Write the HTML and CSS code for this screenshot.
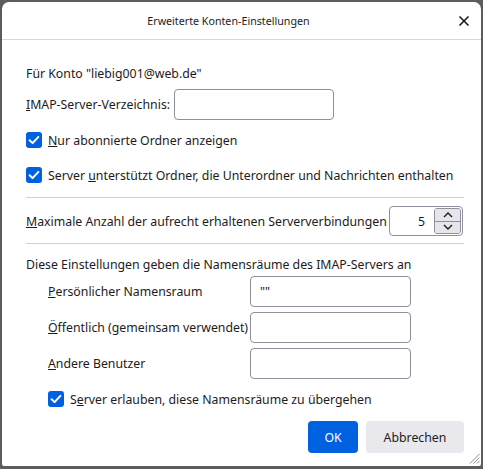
FILE: index.html
```html
<!DOCTYPE html>
<html lang="de">
<head>
<meta charset="utf-8">
<title>Erweiterte Konten-Einstellungen</title>
<link rel="stylesheet" href="styles.css">
</head>
<body>
<div class="window">
  <header class="titlebar">
    <span class="title">Erweiterte Konten-Einstellungen</span>
    <button class="close" aria-label="Schließen">
      <svg width="12" height="12" viewBox="0 0 12 12"><path d="M1.5 1.5 L10.5 10.5 M10.5 1.5 L1.5 10.5" stroke="#1b1b1b" stroke-width="1.6" fill="none"/></svg>
    </button>
  </header>

  <main class="content">
    <div class="row row-account">Für Konto "liebig001@web.de"</div>

    <div class="row row-dir">
      <label class="dir-label"><u>I</u>MAP-Server-Verzeichnis:</label>
      <span class="field field-dir"></span>
    </div>

    <div class="row row-check row-cb1">
      <span class="checkbox"><svg width="16" height="16" viewBox="0 0 16 16"><path d="M3.6 8.2 L6.6 11.1 L12.4 4.9" stroke="#fff" stroke-width="2" fill="none" stroke-linecap="round" stroke-linejoin="round"/></svg></span>
      <span><u>N</u>ur abonnierte Ordner anzeigen</span>
    </div>

    <div class="row row-check row-cb2">
      <span class="checkbox"><svg width="16" height="16" viewBox="0 0 16 16"><path d="M3.6 8.2 L6.6 11.1 L12.4 4.9" stroke="#fff" stroke-width="2" fill="none" stroke-linecap="round" stroke-linejoin="round"/></svg></span>
      <span>Server <u>u</u>nterstützt Ordner, die Unterordner und Nachrichten enthalten</span>
    </div>

    <hr class="sep sep-1">

    <div class="row row-max">
      <span><u>M</u>aximale Anzahl der aufrecht erhaltenen Serververbindungen</span>
      <span class="number">
        <span class="number-value">5</span>
        <span class="spin">
          <span class="spin-btn spin-up"><svg width="10" height="6" viewBox="0 0 10 6"><path d="M1 5 L5 1 L9 5" stroke="#1b1b1b" stroke-width="1.4" fill="none"/></svg></span>
          <span class="spin-btn spin-down"><svg width="10" height="6" viewBox="0 0 10 6"><path d="M1 1 L5 5 L9 1" stroke="#1b1b1b" stroke-width="1.4" fill="none"/></svg></span>
        </span>
      </span>
    </div>

    <hr class="sep sep-2">

    <div class="row row-ns-intro">Diese Einstellungen geben die Namensräume des IMAP-Servers an</div>

    <div class="ns-grid">
      <label><u>P</u>ersönlicher Namensraum</label>
      <span class="field field-ns">""</span>
      <label><u>Ö</u>ffentlich (gemeinsam verwendet)</label>
      <span class="field field-ns"></span>
      <label><u>A</u>ndere Benutzer</label>
      <span class="field field-ns"></span>
    </div>

    <div class="row row-check row-cb3">
      <span class="checkbox"><svg width="16" height="16" viewBox="0 0 16 16"><path d="M3.6 8.2 L6.6 11.1 L12.4 4.9" stroke="#fff" stroke-width="2" fill="none" stroke-linecap="round" stroke-linejoin="round"/></svg></span>
      <span>S<u>e</u>rver erlauben, diese Namensräume zu übergehen</span>
    </div>

    <div class="buttons">
      <button class="btn btn-primary">OK</button>
      <button class="btn btn-secondary">Abbrechen</button>
    </div>
  </main>

  <svg class="grip" width="11" height="11" viewBox="0 0 11 11">
    <path d="M10.5 1 L1 10.5 M10.5 4.5 L4.5 10.5 M10.5 8 L8 10.5" stroke="#8a8a8a" stroke-width="1" fill="none"/>
  </svg>
</div>
</body>
</html>
```

FILE: styles.css
```css
* {
  box-sizing: border-box;
}

html, body {
  margin: 0;
  height: 100%;
}

body {
  background: #5c5c5c;
  font-family: "Noto Sans", "Open Sans", sans-serif;
  font-size: 12.3px;
  color: #1c1b22;
  overflow: hidden;
}

.window {
  position: relative;
  margin: 2px 2px 0 2px;
  height: 464px;
  background: #fff;
  border-radius: 7px 7px 2px 2px;
  display: flex;
  flex-direction: column;
}

/* title bar */
.titlebar {
  height: 38px;
  border-bottom: 1px solid #d6d6d6;
  display: flex;
  align-items: center;
  justify-content: center;
  padding-right: 26px;
  position: relative;
}

.title {
  font-size: 10.7px;
  color: #1b1b1b;
  margin-top: 1px;
}

.close {
  position: absolute;
  right: 11px;
  top: 13px;
  width: 12px;
  height: 12px;
  padding: 0;
  border: 0;
  background: none;
  display: flex;
}

/* body of the dialog */
.content {
  padding: 0 17px 0 24px;
  display: flex;
  flex-direction: column;
}

.row {
  display: flex;
  align-items: center;
  height: 20px;
  white-space: nowrap;
}

.row-account { margin-top: 23px; }

.row-dir {
  margin-top: 6px;
  height: 31px;
}

.dir-label {
  width: 148px;
}

.field {
  display: flex;
  align-items: center;
  height: 31px;
  border: 1px solid #8f8f9d;
  border-radius: 4px;
  background: #fff;
  padding: 0 9px;
}

.field-dir { width: 160px; }

.row-check { gap: 6px; }
.row-cb1 { margin-top: 10px; }
.row-cb2 { margin-top: 15px; }

.checkbox {
  width: 16px;
  height: 16px;
  border-radius: 3px;
  background: #0061e0;
  display: flex;
  flex: none;
}

.sep {
  margin: 0;
  border: 0;
  border-top: 1px solid #cfcfd8;
  height: 0;
}

.sep-1 { margin-top: 12px; }
.sep-2 { margin-top: 7px; }

.row-max {
  margin-top: 8px;
  height: 30px;
  justify-content: space-between;
  padding-right: 1px;
}

.number {
  width: 74px;
  height: 30px;
  border: 1px solid #8f8f9d;
  border-radius: 4px;
  display: flex;
  align-items: center;
  justify-content: flex-end;
  padding: 1px 1px 1px 0;
}

.number-value {
  margin-right: 9px;
}

.spin {
  width: 27px;
  height: 26px;
  display: flex;
  flex-direction: column;
  border: 1px solid #8f8f9d;
  border-radius: 3px;
  overflow: hidden;
}

.spin-btn {
  flex: 1;
  background: #e6e6ea;
  display: flex;
  align-items: center;
  justify-content: center;
}

.spin-up { border-bottom: 1px solid #8f8f9d; }

.row-ns-intro { margin-top: 10px; }

.ns-grid {
  margin-top: 2px;
  padding-left: 22px;
  display: grid;
  grid-template-columns: 202px 161px;
  grid-auto-rows: 31px;
  row-gap: 5px;
  align-items: center;
  white-space: nowrap;
}

.field-ns { width: 161px; }

.row-cb3 {
  margin-top: 10px;
  padding-left: 22px;
}

.buttons {
  margin-top: 12px;
  display: flex;
  justify-content: flex-end;
  gap: 8px;
}

.btn {
  height: 32px;
  border: 0;
  border-radius: 4px;
  font-family: inherit;
  font-size: 12.3px;
  padding: 0;
}

.btn-primary {
  width: 50px;
  background: #0061e0;
  color: #fff;
}

.btn-secondary {
  width: 98px;
  background: #e9e9ed;
  color: #1c1b22;
}

.grip {
  position: absolute;
  right: 1px;
  bottom: 2px;
}
```
